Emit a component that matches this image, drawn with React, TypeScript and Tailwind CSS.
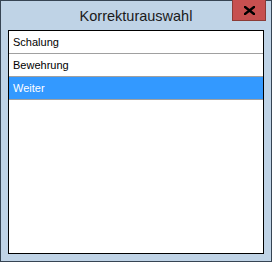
import React from "react";

const items = [
  { label: "Schalung", selected: false },
  { label: "Bewehrung", selected: false },
  { label: "Weiter", selected: true },
];

const App = () => {
  return (
    <div className="relative flex h-[262px] w-[272px] flex-col border border-[#364453] bg-[#bfd3e6] font-['Liberation_Sans',Arial,sans-serif]">
      <div className="flex h-[29px] items-center justify-center pt-[1px]">
        <span className="text-[14.5px] leading-none text-[#1a1a1a]">
          Korrekturauswahl
        </span>
      </div>
      <button className="absolute right-[5px] top-[-1px] flex h-[21px] w-[34px] items-center justify-center border border-t-0 border-[#8c3b36] bg-[#c75050]">
        <svg width="11" height="9" viewBox="0 0 11 9">
          <path d="M1 1 L10 8 M10 1 L1 8" stroke="#000" strokeWidth="2.4" strokeLinecap="square" />
        </svg>
      </button>
      <div className="mx-[7px] h-[224px] w-[256px] border border-black bg-white">
        {items.map((item, idx) => (
          <div
            key={idx}
            className={
              item.selected
                ? "flex h-[23px] items-center border-b border-[#a0a0a0] bg-[#3399ff] pl-[4px] text-[11px] text-white"
                : "flex h-[23px] items-center border-b border-[#a0a0a0] pl-[4px] text-[11px] text-black"
            }
          >
            {item.label}
          </div>
        ))}
      </div>
    </div>
  );
};

export default App;
